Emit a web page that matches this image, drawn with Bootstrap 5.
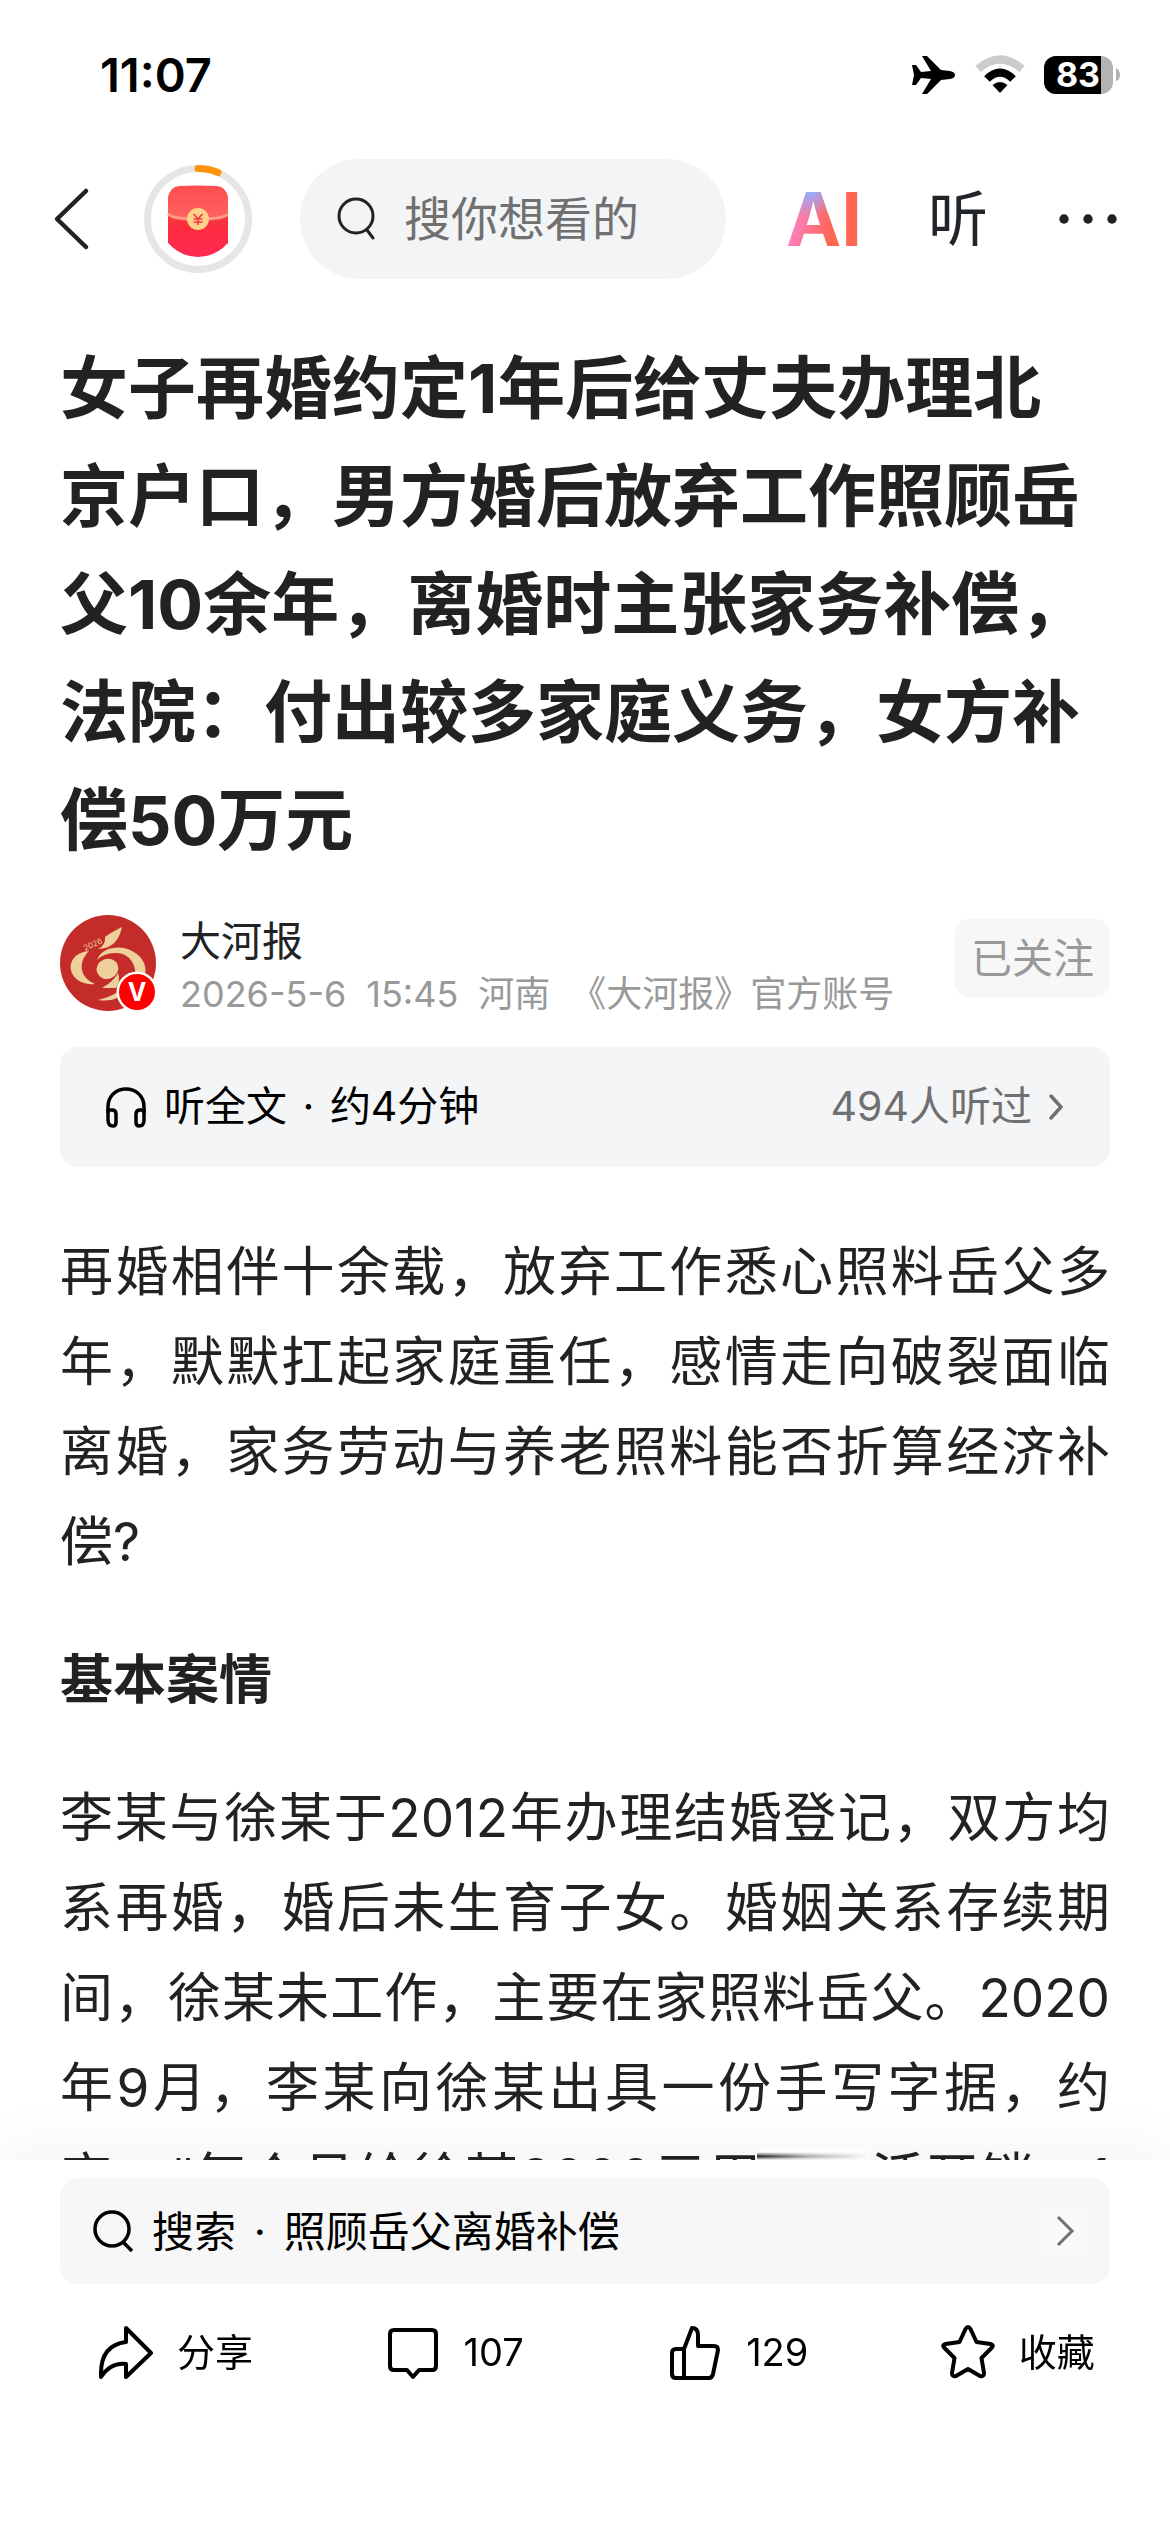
<!DOCTYPE html>
<html lang="zh-CN">
<head>
<meta charset="utf-8">
<meta name="viewport" content="width=device-width, initial-scale=1">
<title>大河报</title>
<link href="https://cdn.jsdelivr.net/npm/bootstrap@5.3.0/dist/css/bootstrap.min.css" rel="stylesheet">
<style>
  body { font-family: Inter, "Noto Sans CJK SC", sans-serif; color: #222; background: #fff; overflow-x: hidden; }
  svg { display: block; flex: none; }
  button { color: inherit; }
  .status-bar { height: 150px; padding: 0 48px 0 100px; }
  .clock { font-size: 47px; line-height: 56px; font-weight: 600; color: #000; }
  .top-nav { height: 138px; padding: 0 52px; }
  .search-pill { width: 426px; height: 120px; margin-left: 46px; padding: 0 36px; border-radius: 60px; background: #f3f4f6; gap: 28px; }
  .search-pill input { font-size: 47px; line-height: 60px; color: #707070; min-width: 0; outline: 0; }
  .search-pill input::placeholder { color: #707070; opacity: 1; }
  .ai-btn { margin-left: 60px; font-size: 74px; line-height: 90px; font-weight: 700; }
  .ai-btn span { display: block; color: transparent; background: radial-gradient(circle at 30% 14%, #93adff 6px, rgba(147,173,255,0) 32px), linear-gradient(100deg, #fb85c8 12%, #ff6f80 42%, #fd6650 62%); -webkit-background-clip: text; background-clip: text; }
  .listen-btn { margin-left: 66px; font-size: 60px; line-height: 72px; font-weight: 400; }
  .article { padding: 46px 60px 0; }
  .headline { font-size: 68px; line-height: 108px; font-weight: 700; margin-bottom: 41px; padding-right: 12px; }
  .author { height: 96px; gap: 24px; }
  .author-name { font-size: 41px; line-height: 52px; }
  .author-meta { font-size: 36px; line-height: 54px; color: #999; gap: 20px; }
  .follow-btn { font-size: 41px; line-height: 46px; color: #999; background: #f7f7f7; padding: 16px; border-radius: 14px; }
  .listen-card { height: 120px; margin-top: 36px; padding: 0 46px 0 44px; border-radius: 18px; background: #f4f5f7; font-size: 41px; color: #000; }
  .listen-count { color: #707070; }
  .story { margin-top: 60px; font-size: 53px; line-height: 90px; }
  .story p, .story h2 { margin: 0 0 48px; text-align: justify; }
  .story h2 { font-size: 53px; line-height: 90px; font-weight: 700; }
  .story .run-on { text-align-last: justify; }
  .dock { height: 372px; padding: 18px 60px 0; background: #fff; box-shadow: 0 -10px 60px rgba(0,0,0,.05); }
  .related { height: 106px; padding: 0 22px 0 32px; border-radius: 18px; background: #f7f7f7; font-size: 42px; color: #000; }
  .related-dot { margin: 0 6px; }
  .related-arrow { width: 48px; height: 48px; background: #f8f9fb; }
  .actions { display: grid; grid-template-columns: 288fr 282fr 272fr 154fr; margin-top: 33px; padding: 0 15px 0 37px; }
  .action { font-size: 38px; line-height: 70px; color: #000; }
  .smear { top: -12px; left: 64.7%; width: 9.7%; height: 12px; background: linear-gradient(#fcfcfc 35%, transparent 70%, #fcfcfc), linear-gradient(90deg, #222, #aaa 45%, #fcfcfc); }
</style>
<script src="https://cdn.jsdelivr.net/npm/bootstrap@5.3.0/dist/js/bootstrap.bundle.min.js"></script>
</head>
<body>
<header>
  <div class="status-bar d-flex align-items-center justify-content-between">
    <span class="clock">11:07</span>
    <div class="d-flex align-items-center">
      <svg width="44" height="40" viewBox="0 0 44 40"><path d="M0 10h4l5 7 10-1L10 1h5l14 14 9 1q5 1 5 4t-5 4l-9 1-14 14h-5l9-15-10-1-5 7H0l2-10z" fill="#000"/></svg>
      <svg class="ms-3" width="56" height="40" viewBox="0 0 56 40"><g fill="none" stroke-width="8"><path d="M6 14Q28-5 50 14" stroke="#ccc"/><path d="M15 24Q28 11 41 24" stroke="#000"/></g><path d="M20.500 30q7.500-6 15 0L28 38z" fill="#000"/></svg>
      <svg class="ms-3" width="78" height="40" viewBox="0 0 78 40"><defs><clipPath id="cell"><rect x="0" y="1" width="69" height="38" rx="12"/></clipPath></defs><g clip-path="url(#cell)"><rect width="78" height="40" fill="#b3b3b3"/><rect width="57" height="40" fill="#000"/></g><path d="M72 13q4 2 4 7t-4 6z" fill="#b3b3b3"/><text x="34" y="32" text-anchor="middle" font-family="Inter, sans-serif" font-size="34" font-weight="700" fill="#fff">83</text></svg>
    </div>
  </div>
  <nav class="top-nav d-flex align-items-center" aria-label="导航">
    <button class="btn p-0 border-0" aria-label="返回"><svg width="42" height="64" viewBox="0 0 42 64"><path d="M34 4 5 32l29 28" fill="none" stroke="#222" stroke-width="4.500" stroke-linecap="round" stroke-linejoin="round"/></svg></button>
    <button class="btn p-0 border-0 ms-5" aria-label="红包">
      <svg width="112" height="112" viewBox="0 0 112 112">
        <defs><linearGradient id="flap" x2="0" y2="1"><stop stop-color="#ff4d50"/><stop offset="1" stop-color="#ff6460"/></linearGradient><linearGradient id="pocket" x2="0" y2="1"><stop stop-color="#f33a3d"/><stop offset=".4" stop-color="#fd2b40"/><stop offset="1" stop-color="#ff2a55"/></linearGradient></defs>
        <circle cx="56" cy="56" r="50.500" fill="none" stroke="#e6e6e6" stroke-width="7"/>
        <path d="M56 5.500q11 0 20 4" fill="none" stroke="#fe940b" stroke-width="7" stroke-linecap="round"/>
        <path d="M26 50h60v30q-13 14-30 14T26 80z" fill="url(#pocket)"/>
        <path d="M26 53V34q2-10 11-11 19-1 38 0 9 1 11 11v19q-5 5-30 5t-30-5z" fill="url(#flap)"/>
        <path d="M26 51q5 5 30 5t30-5" fill="none" stroke="#ff9d84" stroke-width="2.500"/>
        <circle cx="56" cy="56" r="11" fill="#ffd08c"/>
        <path d="m51.500 51 4.500 5 4.500-5M56 56v6M51.500 56h9M51.500 59h9" fill="none" stroke="#f0393c" stroke-width="1.600"/>
      </svg>
    </button>
    <label class="search-pill d-flex align-items-center">
      <svg width="40" height="44" viewBox="0 0 40 44"><g fill="none" stroke="#222" stroke-width="3" stroke-linecap="round"><circle cx="20" cy="19" r="17"/><path d="m31 33 6 8"/></g></svg>
      <input class="border-0 bg-transparent p-0 w-100" type="text" placeholder="搜你想看的" aria-label="搜索">
    </label>
    <button class="btn p-0 border-0 ai-btn"><span>AI</span></button>
    <button class="btn p-0 border-0 listen-btn">听</button>
    <button class="btn p-0 border-0 ms-auto" aria-label="更多"><svg width="62" height="14" viewBox="0 0 62 14"><g fill="#222"><circle cx="8" cy="7" r="4.700"/><circle cx="32" cy="7" r="4.700"/><circle cx="56" cy="7" r="4.700"/></g></svg></button>
  </nav>
</header>

<main class="article">
  <h1 class="headline">女子再婚约定1年后给丈夫办理北京户口，男方婚后放弃工作照顾岳父10余年，离婚时主张家务补偿，法院：付出较多家庭义务，女方补偿50万元</h1>
  <div class="author d-flex align-items-start">
    <svg width="96" height="96" viewBox="0 0 96 96">
      <circle cx="48" cy="48" r="48" fill="#c32c28"/>
      <g fill="#eed09a">
        <path d="M62 12Q50 18 45 22q1 8-7 12 13-1 18-8 4-5 6-14z"/>
        <path d="M29 36C6 38 5 62 24 68q7 2 11 1C19 62 18 47 29 36z"/>
        <path d="M37 45C42 31 62 30 72 36 84 42 88 53 84 62l-9 3C78 49 68 37 55 38q-11 0-18 7z"/>
        <ellipse cx="47.500" cy="54" rx="11" ry="10" transform="rotate(-20 47 54)"/>
        <path d="M58 58q-4 8-16 15h14q5-6 2-15z"/>
        <path d="M38 85q13-3 21-9v6q-9 5-21 3z"/>
      </g>
      <text transform="translate(25 36) rotate(-24)" font-family="Inter, sans-serif" font-size="8" fill="#eed09a">2026</text>
      <circle cx="77" cy="77" r="20.500" fill="#fff"/><circle cx="77" cy="77" r="18" fill="#fe0000"/>
      <text x="77" y="86" text-anchor="middle" font-family="Inter, sans-serif" font-size="25" font-weight="700" fill="#fff">V</text>
    </svg>
    <div class="me-auto">
      <div class="author-name">大河报</div>
      <div class="author-meta d-flex"><span>2026-5-6</span><span>15:45</span><span>河南</span><span>《大河报》官方账号</span></div>
    </div>
    <button class="btn border-0 follow-btn mt-1">已关注</button>
  </div>
  <a href="#" class="listen-card d-flex align-items-center text-decoration-none">
    <svg class="me-3" width="44" height="44" viewBox="0 0 44 44"><g fill="none" stroke="#000" stroke-width="3.500" stroke-linejoin="round"><path d="M4 28v-6C4-2 40-2 40 22v6"/><path d="M4 25h4q4 0 4 4v8q0 4-3 4-5 0-5-6zM40 25h-4q-4 0-4 4v8q0 4 3 4 5 0 5-6z"/></g></svg>
    <span class="me-auto">听全文 <span class="mx-1">·</span> 约4分钟</span>
    <span class="listen-count">494人听过</span>
    <svg class="ms-3" width="16" height="28" viewBox="0 0 16 28"><path d="m3 3 10 11L3 25" fill="none" stroke="#707070" stroke-width="3.500" stroke-linecap="round"/></svg>
  </a>
  <article class="story">
    <p>再婚相伴十余载，放弃工作悉心照料岳父多年，默默扛起家庭重任，感情走向破裂面临离婚，家务劳动与养老照料能否折算经济补偿?</p>
    <h2>基本案情</h2>
    <p class="run-on mb-0">李某与徐某于2012年办理结婚登记，双方均系再婚，婚后未生育子女。婚姻关系存续期间，徐某未工作，主要在家照料岳父。2020年9月，李某向徐某出具一份手写字据，约定，“每个月给徐某3000元用于生活开销，1</p>
  </article>
</main>

<footer class="dock fixed-bottom">
  <div class="smear position-absolute"></div>
  <a href="#" class="related d-flex align-items-center text-decoration-none">
    <svg class="me-3" width="44" height="48" viewBox="0 0 44 48"><g fill="none" stroke="#000" stroke-width="3.500"><circle cx="20" cy="22" r="17"/><path d="m31 35 9 9"/></g></svg>
    <span class="me-auto">搜索 <span class="related-dot">·</span> 照顾岳父离婚补偿</span>
    <svg class="related-arrow" viewBox="0 0 48 48"><path d="m18 10 14 14-14 14" fill="none" stroke="#707070" stroke-width="3"/></svg>
  </a>
  <div class="actions">
    <button class="btn p-0 border-0 action d-flex align-items-center gap-4"><svg width="56" height="56" viewBox="0 0 56 56"><path d="M29 4 54 29 29 53V40Q14 38 4 53C3 31 12 20 29 18z" fill="none" stroke="#000" stroke-width="4" stroke-linejoin="round"/></svg>分享</button>
    <button class="btn p-0 border-0 action d-flex align-items-center gap-4"><svg width="54" height="56" viewBox="0 0 54 56"><path d="M8 6h38q4 0 4 4v32q0 4-4 4H33l-6 7-6-7H8q-4 0-4-4V10q0-4 4-4z" fill="none" stroke="#000" stroke-width="4" stroke-linejoin="round"/></svg>107</button>
    <button class="btn p-0 border-0 action d-flex align-items-center gap-4"><svg width="54" height="56" viewBox="0 0 54 56"><path d="M4 29q0-4 4-4h8L24 4q6 0 6 7v11h16q4 0 4 4l-5 24q-1 4-4 4H8q-4 0-4-4zM16 25v29" fill="none" stroke="#000" stroke-width="4" stroke-linejoin="round"/></svg>129</button>
    <button class="btn p-0 border-0 action d-flex align-items-center gap-4"><svg width="54" height="56" viewBox="0 0 54 56"><path d="M24.500 5q2.500-4 5 0l6 13 14 2q4 1 1 4L40.500 34l2.500 15q0 4-4 3l-12-7-12 7q-4 1-4-3l2.500-15L3.500 24q-3-3 1-4l14-2z" fill="none" stroke="#000" stroke-width="4" stroke-linejoin="round"/></svg>收藏</button>
  </div>
</footer>
</body>
</html>
